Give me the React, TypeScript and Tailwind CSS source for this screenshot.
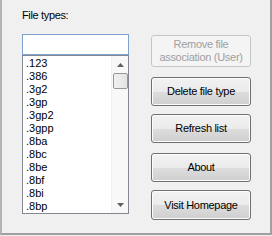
import React from 'react';

const fileTypes = ['.123', '.386', '.3g2', '.3gp', '.3gp2', '.3gpp', '.8ba', '.8bc', '.8be', '.8bf', '.8bi', '.8bp'];

// Windows 7 style push button
function WinButton({ children, disabled, className = '' }: { children: React.ReactNode; disabled?: boolean; className?: string }) {
  if (disabled) {
    return (
      <button
        disabled
        className={`w-[100px] rounded-[3px] border border-[#c4c7ca] bg-[#f4f4f4] text-[#a0a0a0] leading-[13px] tracking-[-0.3px] ${className}`}
      >
        {children}
      </button>
    );
  }
  return (
    <button
      className={`w-[100px] rounded-[3px] border border-[#707070] bg-[linear-gradient(#f2f2f2_0%,#ebebeb_50%,#dddddd_51%,#cfcfcf_100%)] text-black shadow-[inset_0_0_0_1px_#fcfcfc] tracking-[-0.3px] ${className}`}
    >
      {children}
    </button>
  );
}

export default function App() {
  return (
    <div
      className="w-[272px] h-[236px] bg-[#f0f0f0] text-[11px] text-black"
      style={{ fontFamily: '"Liberation Sans", Arial, sans-serif' }}
    >
      <div className="w-full h-[235px] border-l-2 border-r-2 border-b-2 border-[#a0a0a0] border-l-[#b4b4b4] flex pl-[20px] pt-[8px]">
        {/* Left column: label, filter and list */}
        <div className="flex flex-col w-[107px]">
          <div className="h-[14px] leading-[14px] tracking-[-0.35px]">File types:</div>
          <input
            type="text"
            className="mt-[12px] h-[21px] w-[107px] border border-[#7da2ce] bg-white outline-none px-1"
          />
          <div className="mt-[0px] h-[159px] w-[107px] border border-[#828790] bg-white flex">
            <div className="flex-1 pl-[3px] pt-[1px] overflow-hidden">
              {fileTypes.map((ft) => (
                <div key={ft} className="h-[13px] leading-[13px]">{ft}</div>
              ))}
            </div>
            {/* Scrollbar */}
            <div className="w-[17px] bg-[#f8f8f8] border-l border-[#f0f0f0] flex flex-col items-center">
              <div className="h-[17px] w-full flex items-center justify-center">
                <svg width="7" height="4" viewBox="0 0 7 4">
                  <path d="M3.5 0 L7 4 L0 4 Z" fill="#606060" />
                </svg>
              </div>
              <div className="h-[16px] w-[15px] rounded-[2px] border border-[#979797] bg-[linear-gradient(90deg,#f0f0f0,#e4e4e4)]" />
              <div className="flex-1" />
              <div className="h-[17px] w-full flex items-center justify-center">
                <svg width="7" height="4" viewBox="0 0 7 4">
                  <path d="M0 0 L7 0 L3.5 4 Z" fill="#606060" />
                </svg>
              </div>
            </div>
          </div>
        </div>

        {/* Right column: action buttons */}
        <div className="ml-[22px] mt-[27px] flex flex-col">
          <WinButton disabled className="h-[32px]">
            Remove file
            <br />
            association (User)
          </WinButton>
          <WinButton className="mt-[10px] h-[29px]">Delete file type</WinButton>
          <WinButton className="mt-[8px] h-[29px]">Refresh list</WinButton>
          <WinButton className="mt-[10px] h-[29px]">About</WinButton>
          <WinButton className="mt-[8px] h-[30px]">Visit Homepage</WinButton>
        </div>
      </div>
    </div>
  );
}
